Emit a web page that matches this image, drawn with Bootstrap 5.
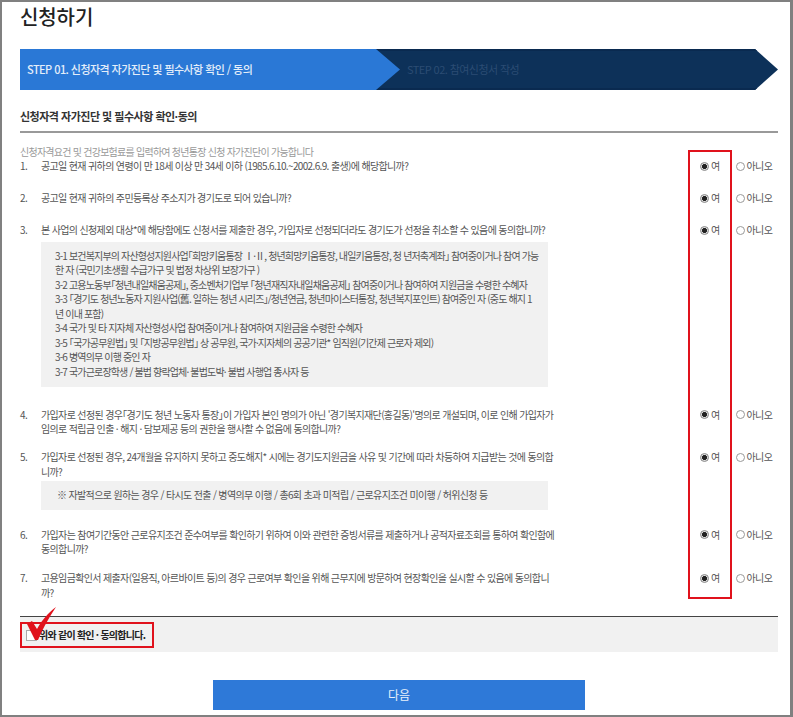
<!DOCTYPE html>
<html lang="ko">
<head>
<meta charset="utf-8">
<title>신청하기</title>
<link href="https://cdn.jsdelivr.net/npm/bootstrap@5.3.0/dist/css/bootstrap.min.css" rel="stylesheet">
<style>
html,body{height:717px;overflow:hidden;background:#fff}
body{font-family:"Noto Sans CJK KR","Liberation Sans",sans-serif;color:#555;font-size:10px;line-height:14.5px;letter-spacing:-.65px}
.page-frame{position:relative;height:717px;border:2px solid #808080;border-width:2px 3px 2px 2px;padding:0 12px 0 18px}
.page-title{font-size:20px;line-height:30px;font-weight:500;color:#222;margin:0;letter-spacing:-.1px}
.steps{margin-top:17px;height:41px}
.step-a,.step-b{height:41px;display:flex;align-items:center;font-size:11px;letter-spacing:-.56px;white-space:nowrap}
.step-a{width:380px;background:#2a78d6;color:#e4eefa;padding-left:7px;position:relative;z-index:1;clip-path:polygon(0 0,356px 0,100% 50%,356px 100%,0 100%);font-weight:500}
.step-b{width:402px;margin-left:-24px;background:#0d3159;color:#2b4c73;padding-left:31px;clip-path:polygon(0 0,379px 0,100% 50%,379px 100%,0 100%);border-top:2px solid #0a2a50;border-bottom:2px solid #0a2a50}
.sec-title{font-size:11px;line-height:18px;font-weight:700;color:#333;margin:17px 0 0;padding-bottom:6px;border-bottom:2px solid #999;letter-spacing:-.5px}
.intro{color:#999;margin-top:13px;height:13px;line-height:12px;letter-spacing:-.75px}
.qrow{display:flex}
.qnum{width:21px;flex:none}
.qbody{width:507px;flex:none;white-space:nowrap}
.qopts{margin-left:auto;display:flex;align-items:center;height:14.5px;width:90px;flex:none;padding-left:12px;white-space:nowrap}
.opt{display:flex;align-items:center;gap:2px;color:#555}
.opt+.opt{margin-left:16px}
.opt input.form-check-input{appearance:none;width:9px;height:9px;margin:0;border:1px solid #999;border-radius:50%;background:#fff;float:none}
.opt input.form-check-input:checked{background:radial-gradient(circle,#222 0 2.2px,#ddd 2.8px);border-color:#888}
.note-box{background:#f1f1f1;color:#555}
.note-a{margin-top:4px;padding:7px 14px 9px 14px;height:145px;letter-spacing:-.85px}
.note-b{margin-top:1.5px;height:29px;padding:7px 16px}
.q2{margin-top:17.5px}
.q3{margin-top:17.5px}
.q4{margin-top:21px}
.q5{margin-top:13.5px}
.q6{margin-top:18px}
.q7{margin-top:14.5px}
.agree{margin-top:16px;height:36px;background:#f1f1f1;border-top:1px solid #444;display:flex;align-items:center}
.agree-box{display:flex;align-items:center;gap:2px;width:134px;height:26px;margin-top:1px;border:2px solid #e0121c;padding-left:4px;color:#222;font-weight:700;font-size:10px;white-space:nowrap;letter-spacing:-.75px}
.agree-box input.form-check-input{appearance:none;width:11px;height:11px;margin:0;border:1px solid #aaa;border-radius:0;background:#fff;float:none}
.next-wrap{margin-top:28px}
.next-btn{display:block;width:372px;height:30px;margin-left:193px;padding:0;border:0;border-radius:0;background:#2e79d8;color:#e9f1fb;font-size:12px;line-height:30px}
.red-col{position:absolute;left:686px;top:148px;width:44px;height:449px;border:2px solid #e0121c;pointer-events:none}
.red-check{position:absolute;left:23px;top:605px;width:32px;height:34px}
</style>
</head>
<body>
<div class="page-frame">
  <h1 class="page-title">신청하기</h1>
  <div class="steps d-flex">
    <div class="step-a">STEP 01. 신청자격 자가진단 및 필수사항 확인 / 동의</div>
    <div class="step-b">STEP 02. 참여신청서 작성</div>
  </div>
  <h2 class="sec-title">신청자격 자가진단 및 필수사항 확인·동의</h2>
  <div class="intro">신청자격요건 및 건강보험료를 입력하여 청년통장 신청 자가진단이 가능합니다</div>

  <div class="qrow">
    <div class="qnum">1.</div>
    <div class="qbody">공고일 현재 귀하의 연령이 만 18세 이상 만 34세 이하 (1985.6.10.~2002.6.9. 출생)에 해당합니까?</div>
    <div class="qopts"><label class="opt"><input class="form-check-input" type="radio" name="q1" checked>여</label><label class="opt"><input class="form-check-input" type="radio" name="q1">아니오</label></div>
  </div>
  <div class="qrow q2">
    <div class="qnum">2.</div>
    <div class="qbody">공고일 현재 귀하의 주민등록상 주소지가 경기도로 되어 있습니까?</div>
    <div class="qopts"><label class="opt"><input class="form-check-input" type="radio" name="q2" checked>여</label><label class="opt"><input class="form-check-input" type="radio" name="q2">아니오</label></div>
  </div>
  <div class="qrow q3">
    <div class="qnum">3.</div>
    <div class="qbody">본 사업의 신청제외 대상*에 해당함에도 신청서를 제출한 경우, 가입자로 선정되더라도 경기도가 선정을 취소할 수 있음에 동의합니까?
      <div class="note-box note-a">3-1 보건복지부의 자산형성지원사업｢희망키움통장 Ⅰ·Ⅱ, 청년희망키움통장, 내일키움통장, 청 년저축계좌｣ 참여중이거나 참여 가능<br>한 자 (국민기초생활 수급가구 및 법정 차상위 보장가구 )<br>3-2 고용노동부｢청년내일채움공제｣, 중소벤처기업부 ｢청년재직자내일채움공제｣ 참여중이거나 참여하여 지원금을 수령한 수혜자<br>3-3 ｢경기도 청년노동자 지원사업(舊. 일하는 청년 시리즈｣/청년연금, 청년마이스터통장, 청년복지포인트) 참여중인 자 (중도 해지 1<br>년 이내 포함)<br>3-4 국가 및 타 지자체 자산형성사업 참여중이거나 참여하여 지원금을 수령한 수혜자<br>3-5 ｢국가공무원법｣ 및 ｢지방공무원법｣ 상 공무원, 국가·지자체의 공공기관* 임직원(기간제 근로자 제외)<br>3-6 병역의무 이행 중인 자<br>3-7 국가근로장학생 / 불법 향락업체· 불법도박· 불법 사행업 종사자 등</div>
    </div>
    <div class="qopts"><label class="opt"><input class="form-check-input" type="radio" name="q3" checked>여</label><label class="opt"><input class="form-check-input" type="radio" name="q3">아니오</label></div>
  </div>
  <div class="qrow q4">
    <div class="qnum">4.</div>
    <div class="qbody">가입자로 선정된 경우｢경기도 청년 노동자 통장｣이 가입자 본인 명의가 아닌 '경기복지재단(홍길동)'명의로 개설되며, 이로 인해 가입자가<br>임의로 적립금 인출 · 해지 · 담보제공 등의 권한을 행사할 수 없음에 동의합니까?</div>
    <div class="qopts"><label class="opt"><input class="form-check-input" type="radio" name="q4" checked>여</label><label class="opt"><input class="form-check-input" type="radio" name="q4">아니오</label></div>
  </div>
  <div class="qrow q5">
    <div class="qnum">5.</div>
    <div class="qbody">가입자로 선정된 경우, 24개월을 유지하지 못하고 중도해지* 시에는 경기도지원금을 사유 및 기간에 따라 차등하여 지급받는 것에 동의합<br>니까?
      <div class="note-box note-b">※ 자발적으로 원하는 경우 / 타시도 전출 / 병역의무 이행 / 총6회 초과 미적립 / 근로유지조건 미이행 / 허위신청 등</div>
    </div>
    <div class="qopts"><label class="opt"><input class="form-check-input" type="radio" name="q5" checked>여</label><label class="opt"><input class="form-check-input" type="radio" name="q5">아니오</label></div>
  </div>
  <div class="qrow q6">
    <div class="qnum">6.</div>
    <div class="qbody">가입자는 참여기간동안 근로유지조건 준수여부를 확인하기 위하여 이와 관련한 증빙서류를 제출하거나 공적자료조회를 통하여 확인함에<br>동의합니까?</div>
    <div class="qopts"><label class="opt"><input class="form-check-input" type="radio" name="q6" checked>여</label><label class="opt"><input class="form-check-input" type="radio" name="q6">아니오</label></div>
  </div>
  <div class="qrow q7">
    <div class="qnum">7.</div>
    <div class="qbody">고용임금확인서 제출자(일용직, 아르바이트 등)의 경우 근로여부 확인을 위해 근무지에 방문하여 현장확인을 실시할 수 있음에 동의합니<br>까?</div>
    <div class="qopts"><label class="opt"><input class="form-check-input" type="radio" name="q7" checked>여</label><label class="opt"><input class="form-check-input" type="radio" name="q7">아니오</label></div>
  </div>

  <div class="agree">
    <label class="agree-box"><input class="form-check-input" type="checkbox">위와 같이 확인 · 동의합니다.</label>
  </div>
  <div class="next-wrap"><button type="button" class="btn next-btn">다음</button></div>

  <div class="red-col"></div>
  <svg class="red-check" viewBox="0 0 32 34" aria-hidden="true"><path d="M2 17 L7 14 L12 22 C17 13 23 6 31 0 C25 9 19 19 13 33 L10 33 Z" fill="#e0121c"/></svg>
</div>
<script src="https://cdn.jsdelivr.net/npm/bootstrap@5.3.0/dist/js/bootstrap.bundle.min.js"></script>
</body>
</html>
